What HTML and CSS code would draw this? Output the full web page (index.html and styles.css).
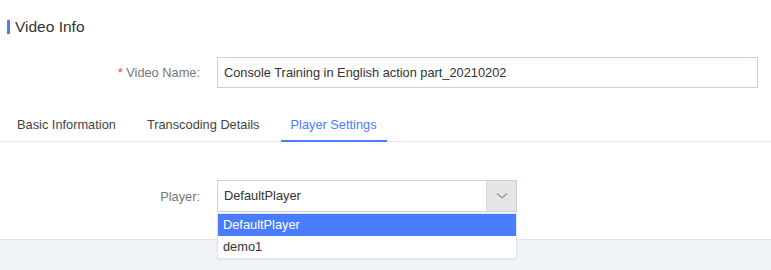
FILE: index.html
```html
<!DOCTYPE html>
<html lang="en">

<head>
  <meta charset="UTF-8">
  <title>Video Info</title>
  <link rel="stylesheet" href="styles.css">
</head>

<body>
  <div class="panel">
    <h2 class="panel__title">Video Info</h2>

    <div class="form-row form-row--name">
      <label class="form-row__label"><span class="required">*</span> Video Name:</label>
      <div class="text-input">Console Training in English action part_20210202</div>
    </div>

    <ul class="tabs">
      <li class="tabs__item">Basic Information</li>
      <li class="tabs__item">Transcoding Details</li>
      <li class="tabs__item tabs__item--active">Player Settings</li>
    </ul>

    <div class="form-row form-row--player">
      <label class="form-row__label">Player:</label>
      <div class="select">
        <div class="select__value">DefaultPlayer</div>
        <div class="select__arrow">
          <svg width="12" height="8" viewBox="0 0 12 8"><path d="M 1 1.5 L 6 6 L 11 1.5" fill="none" stroke="#8a94a6" stroke-width="1.3"></path></svg>
        </div>
        <ul class="select__menu">
          <li class="select__option select__option--selected">DefaultPlayer</li>
          <li class="select__option">demo1</li>
        </ul>
      </div>
    </div>
  </div>

  <div class="footer"></div>
</body>

</html>
```

FILE: styles.css
```css
html,
body {
  height: 100%;
}

body {
  background-color: #f0f3f7;
  color: #333;
  font-family: "Liberation Sans", Arial, sans-serif;
  font-size: 12.8px;
  margin: 0;
  display: flex;
  flex-direction: column;
}

.panel {
  background-color: #fff;
  height: 240px;
  border-bottom: 1px solid #dfe3ea;
  box-sizing: border-box;
}

.panel__title {
  margin: 20px 0 0 7px;
  padding-left: 5px;
  border-left: 3px solid #4a7cff;
  font-size: 15.5px;
  font-weight: normal;
  line-height: 14px;
  color: #333;
}

.form-row {
  display: flex;
  align-items: center;
}

.form-row--name {
  margin-top: 23px;
}

.form-row--player {
  margin-top: 38px;
}

.form-row__label {
  width: 217px;
  box-sizing: border-box;
  padding-right: 17px;
  text-align: right;
  color: #777;
}

.required {
  color: #e8443a;
}

.text-input {
  width: 541px;
  height: 31px;
  box-sizing: border-box;
  border: 1px solid #c8d0da;
  padding: 0 6px;
  line-height: 29px;
}

.tabs {
  display: flex;
  gap: 11px;
  list-style: none;
  margin: 21px 0 0;
  padding: 0 0 0 7px;
  border-bottom: 1px solid #e4e7ed;
}

.tabs__item {
  padding: 0 10px;
  height: 33px;
  line-height: 31px;
  color: #444;
  border-bottom: 2px solid transparent;
  margin-bottom: -1px;
  box-sizing: border-box;
}

.tabs__item--active {
  color: #4a7cff;
  border-bottom-color: #4a7cff;
}

.select {
  position: relative;
  display: flex;
  width: 300px;
  height: 32px;
  box-sizing: border-box;
  border: 1px solid #c8d0da;
}

.select__value {
  flex: 1;
  padding: 0 6px;
  line-height: 30px;
}

.select__arrow {
  width: 29px;
  background-color: #e6e6e6;
  border-left: 1px solid #d6dbe2;
  display: flex;
  align-items: center;
  justify-content: center;
}

.select__menu {
  position: absolute;
  top: 32px;
  left: -1px;
  width: 300px;
  box-sizing: border-box;
  list-style: none;
  margin: 0;
  padding: 0;
  background-color: #fff;
  border: 1px solid #dfe3ea;
  box-shadow: 0 1px 2px rgba(0, 0, 0, 0.06);
}

.select__option {
  height: 22px;
  line-height: 22px;
  padding: 0 5px;
}

.select__option--selected {
  background-color: #4a7cff;
  color: #fff;
}

.footer {
  flex: 1;
}
```
